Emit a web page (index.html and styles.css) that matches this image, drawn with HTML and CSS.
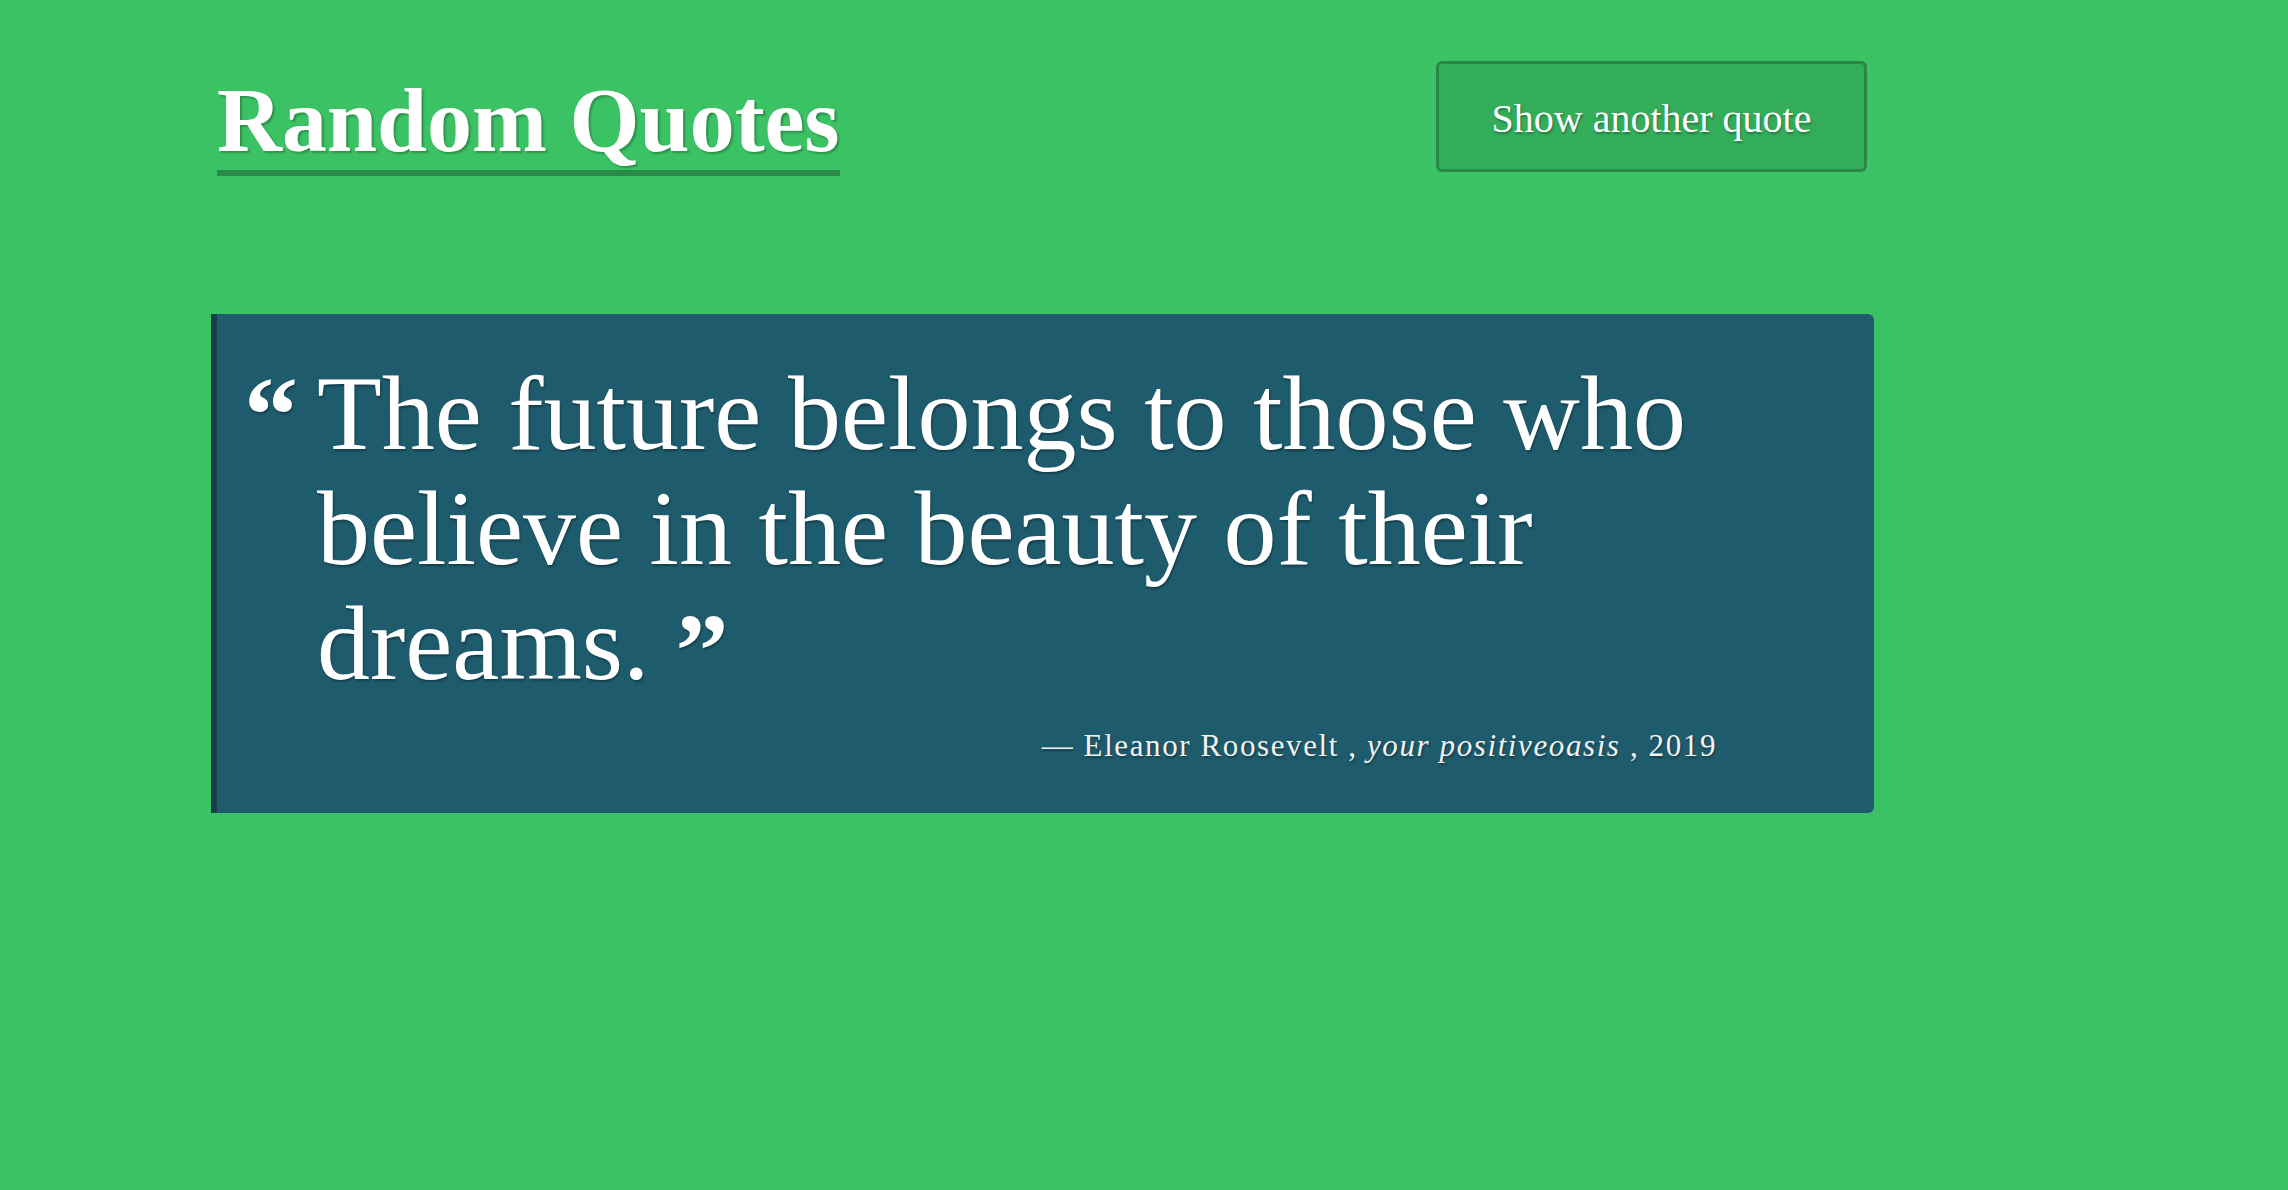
FILE: index.html
```html
<!DOCTYPE html>
<html lang="en">
<head>
<meta charset="utf-8">
<title>Random Quotes</title>
<link rel="stylesheet" href="styles.css">
</head>
<body>
<div class="page">
  <header class="header">
    <h1 class="title">Random Quotes</h1>
    <button class="btn" type="button">Show another quote</button>
  </header>
  <blockquote class="quote-box">
    <span class="mark-open">&ldquo;</span>
    <div class="quote-body">
      <p class="quote-text">The future belongs to those who believe in the beauty of their dreams.<span class="mark-close">&rdquo;</span></p>
      <p class="cite">&mdash; Eleanor Roosevelt , <em>your positiveoasis</em> , 2019</p>
    </div>
  </blockquote>
</div>
</body>
</html>
```

FILE: styles.css
```css
html, body {
  margin: 0;
  padding: 0;
}
body {
  background: #3bc264;
  min-height: 1190px;
  font-family: "Liberation Serif", "Times New Roman", serif;
  color: #ffffff;
}
.page {
  width: 1663px;
  padding-left: 211px;
}
.header {
  display: flex;
  justify-content: space-between;
  align-items: flex-start;
  padding: 61px 7px 0 6px;
}
.title {
  margin: 15px 0 0 0;
  font-size: 90px;
  line-height: 90px;
  font-weight: 700;
  padding-bottom: 4px;
  border-bottom: 6px solid #2a8a48;
  text-shadow: 2px 2px 2px rgba(0, 0, 0, 0.25);
}
.btn {
  width: 431px;
  height: 111px;
  margin: 0;
  padding: 4px 0 0 0;
  background: #34ad5a;
  border: 3px solid #2b8646;
  border-radius: 6px;
  color: #ffffff;
  font-family: "Liberation Serif", "Times New Roman", serif;
  font-size: 40px;
  line-height: 44px;
  text-shadow: 1px 2px 2px rgba(0, 0, 0, 0.3);
  cursor: pointer;
}
.quote-box {
  display: flex;
  margin: 138px 0 0 0;
  padding: 42px 157px 43px 27px;
  background: #1e5b6c;
  border-left: 6px solid #153f4a;
  border-radius: 0 6px 6px 0;
}
.mark-open {
  flex: 0 0 73px;
  font-size: 108px;
  font-weight: 700;
  line-height: 108px;
  height: 90px;
  margin-top: 5px;
  text-shadow: 1px 2px 2px rgba(0, 0, 0, 0.3);
}
.quote-body {
  flex: 1;
}
.quote-text {
  margin: 0;
  font-size: 106px;
  line-height: 115px;
  text-shadow: 1px 2px 2px rgba(0, 0, 0, 0.3);
}
.mark-close {
  margin-left: 26px;
  font-weight: 700;
  position: relative;
  top: 8px;
}
.cite {
  margin: 22px 0 0 0;
  text-align: right;
  font-size: 31px;
  line-height: 46.5px;
  letter-spacing: 1.6px;
  color: #f2f2f2;
  text-shadow: 1px 2px 2px rgba(0, 0, 0, 0.3);
}
.cite em {
  font-style: italic;
}
```
